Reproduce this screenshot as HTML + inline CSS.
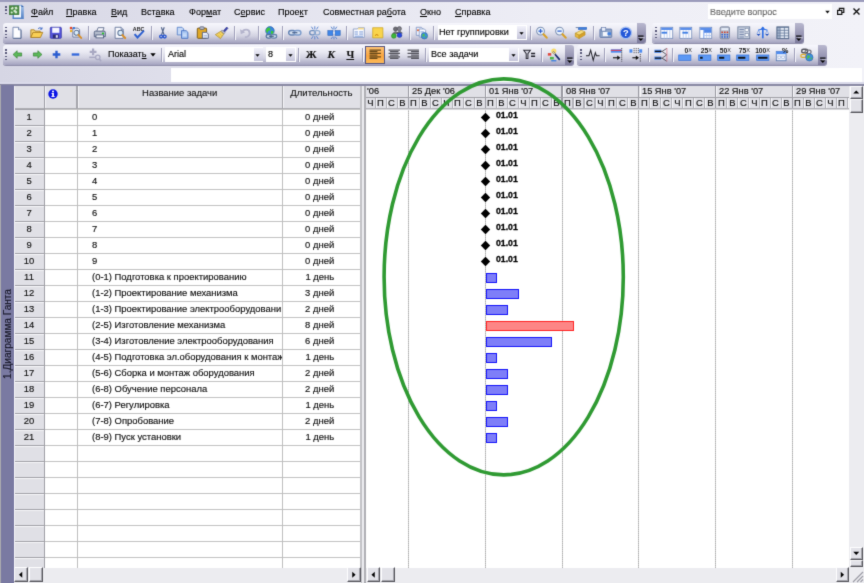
<!DOCTYPE html><html><head><meta charset="utf-8"><title>Project</title><style>
html,body{margin:0;padding:0}
body{width:864px;height:583px;overflow:hidden;position:relative;background:#fff;font-family:"Liberation Sans",sans-serif;font-size:9.45px;color:#111}
#all{position:absolute;left:0;top:0;width:864px;height:583px;overflow:hidden;filter:url(#soft)}
.a{position:absolute}
.t{will-change:transform;-webkit-text-stroke:0.15px #111;position:absolute;white-space:nowrap;line-height:12px;height:12px}
#dock{left:0;top:0;width:864px;height:85px;background:linear-gradient(90deg,#d6d6e4 0%,#e3e3ee 30%,#ededf5 62%,#f2f2f8 100%)}
svg{will-change:transform}
#topline{left:0;top:0;width:864px;height:1.6px;background:#9c9cbc}
.tb{position:absolute;height:20px;border-radius:3px 3px 3px 3px;background:linear-gradient(180deg,#f7f7fd 0%,#e9e9f2 35%,#d2d2e1 65%,#a3a2bf 100%);box-shadow:0 1px 0 #8f8eaa}
.opt{position:absolute;top:0;width:9px;height:20px;border-radius:0 3px 3px 0;background:linear-gradient(180deg,#b9b8cf 0%,#7c7a9c 100%)}
.grip{position:absolute;left:1.8px;top:4px;width:2px;height:13px;background:repeating-linear-gradient(180deg,#5c5c7c 0,#5c5c7c 1.5px,transparent 1.5px,transparent 3.3px)}
.sep{position:absolute;top:3px;width:1px;height:14px;background:#a0a0ba;box-shadow:1px 0 0 #f6f6fb}
.m{will-change:transform;position:absolute;top:6px;font-size:9.05px;line-height:12px;white-space:nowrap;color:#000;-webkit-text-stroke:0.12px #000}
.m u{text-decoration:underline;text-underline-offset:1px}
.hc{position:absolute;background:#e0e0e6}
</style></head><body><svg width="0" height="0" style="position:absolute"><filter id="soft" x="0" y="0" width="100%" height="100%" color-interpolation-filters="sRGB"><feConvolveMatrix order="3" kernelMatrix="0.01323 0.08855 0.01323 0.08855 0.59290 0.08855 0.01323 0.08855 0.01323" edgeMode="duplicate" preserveAlpha="true"/></filter></svg><div id="all">
<div class="a" id="dock"></div><div class="a" id="topline"></div>
<div class="grip" style="left:5px;top:6px;height:9px"></div>
<svg class="a" style="left:9px;top:3.6px" width="16" height="16" viewBox="0 0 16 16"><defs><linearGradient id="pg" x1="0" y1="0" x2="0" y2="1"><stop offset="0" stop-color="#a8c4ea"/><stop offset="1" stop-color="#4f7fc4"/></linearGradient></defs><path d="M3.500 .800h9l2.300 2.300v12h-11.300z" fill="url(#pg)"/><path d="M5 2h7v11.500h-7z" fill="#f4f8fd"/><path d="M12.500 .800l2.300 2.300h-2.300z" fill="#2f5fa8"/><rect x="0.300" y="1.800" width="9.600" height="8.800" fill="#4d8f45" stroke="#356f30" stroke-width=".7"/><path d="M1.500 4.500l2-1.700 1.500 1.200-2 2zM5.500 3l2.500-.3.500 2.200-2 .8zM4 7l1.800-1.500 2.700 2.500-1.500 1.800zM1.500 8l1.500-.800 1 1.800-1.800.5z" fill="#e4f2e0" opacity=".9"/></svg>
<div class="m" style="left:31px"><u>Ф</u>айл</div>
<div class="m" style="left:66px"><u>П</u>равка</div>
<div class="m" style="left:110.6px"><u>В</u>ид</div>
<div class="m" style="left:140.6px">Вст<u>а</u>вка</div>
<div class="m" style="left:188.8px">Фор<u>м</u>ат</div>
<div class="m" style="left:234px">С<u>е</u>рвис</div>
<div class="m" style="left:277.8px">Прое<u>к</u>т</div>
<div class="m" style="left:323px">Совместная ра<u>б</u>ота</div>
<div class="m" style="left:420px"><u>О</u>кно</div>
<div class="m" style="left:455.2px"><u>С</u>правка</div>
<div class="a" style="left:708px;top:4px;width:124px;height:15px;background:#fff"></div>
<div class="m" style="left:710px;top:5.5px;color:#8a8a8a">Введите вопрос</div>
<svg class="a" style="left:822px;top:4px" width="42" height="15" viewBox="0 0 42 15"><path d="M3.2 6.8 h4.6 l-2.3 2.6z" fill="#111"/><rect x="15.6" y="6.4" width="4.2" height="4" fill="none" stroke="#111" stroke-width="1.2"/><path d="M17.4 6.2 v-1.9 h4.4 v4.2 h-1.8" fill="none" stroke="#111" stroke-width="1.2"/><path d="M31.5 4.5 l6 6 M37.5 4.5 l-6 6" stroke="#111" stroke-width="1.4"/></svg>
<div class="tb" style="left:3px;top:23px;width:642.6px"><div class="opt" style="left:633.6px"></div><div class="grip" style="left:1.8px"></div></div>
<svg class="a" style="left:637.1999999999999px;top:34.9px" width="7.600" height="7.600" viewBox="0 0 7 7"><path d="M1 1h5" stroke="#000" stroke-width="1.100"/><path d="M1 3h5L3.500 5.600z" fill="#000"/><path d="M2 2h5" stroke="#fff" stroke-width=".6" opacity=".8" transform="translate(.6,.6)"/></svg>
<svg class="a" style="left:10.40px;top:26.20px" width="13.6" height="13.6" viewBox="0 0 16 16" overflow="visible"><path d="M3.500 1.500h6.500l3 3v10h-9.500z" fill="#fdfdff" stroke="#6a7ea8"/><path d="M10 1.500v3h3" fill="#d4deef" stroke="#6a7ea8"/><path d="M4 14.500h9v-9.500" fill="none" stroke="#4a5c84" stroke-width=".8"/></svg>
<svg class="a" style="left:30.20px;top:26.20px" width="13.6" height="13.6" viewBox="0 0 16 16" overflow="visible"><path d="M1 13.5V4.5h4l1 1.5h6v2" fill="#f7d774" stroke="#a87a1c"/><path d="M1 13.5l2.5-6h11.5l-2.7 6z" fill="#f9cf55" stroke="#a87a1c"/><path d="M9.5 3.2c1.5-1.6 3.5-1.4 4.3.3m.3-2v2.2h-2.2" fill="none" stroke="#3a66c4" stroke-width="1.1"/></svg>
<svg class="a" style="left:49.40px;top:26.20px" width="13.6" height="13.6" viewBox="0 0 16 16" overflow="visible"><rect x="1.500" y="1.500" width="13" height="13" rx="1" fill="#5454dc" stroke="#3434a4" stroke-width=".9"/><rect x="3.800" y="2" width="8.400" height="6" fill="#f6f6ff"/><rect x="4.500" y="10" width="7" height="4.500" fill="#2c2c74"/><rect x="8" y="10.800" width="2.400" height="3" fill="#e4e4f4"/></svg>
<svg class="a" style="left:68.70px;top:26.20px" width="13.6" height="13.6" viewBox="0 0 16 16" overflow="visible"><path d="M4.500 2.500h6l2 2v8.500h-8z" fill="#fafaff" stroke="#5f7096"/><rect x="1" y="1" width="2.800" height="2.800" fill="#e0482c"/><rect x="4.400" y="1.200" width="2.600" height="2.600" fill="#3b78d8"/><rect x="1.200" y="4.600" width="2.600" height="2.600" fill="#f0b428"/><circle cx="8.800" cy="8" r="3" fill="#d9ecfa" stroke="#5f7496" stroke-width="1.200"/><path d="M11 10.500l3.300 3.500" stroke="#d8902a" stroke-width="2.400" stroke-linecap="round"/></svg>
<svg class="a" style="left:92.90px;top:26.20px" width="13.6" height="13.6" viewBox="0 0 16 16" overflow="visible"><path d="M4.500 6l1.500-4h7l-1.500 4" fill="#fbfbff" stroke="#5a6888"/><path d="M1.500 7.500q0-1.500 1.500-1.500h10q1.500 0 1.500 1.500v5h-13z" fill="#b4bccc" stroke="#4c5a7c"/><rect x="3.500" y="10.500" width="9" height="3.500" fill="#eef0f6" stroke="#4c5a7c"/><rect x="10.500" y="7.800" width="2.400" height="1.900" fill="#22c422"/></svg>
<svg class="a" style="left:113.20px;top:26.20px" width="13.6" height="13.6" viewBox="0 0 16 16" overflow="visible"><path d="M2.500 1.500h7l2.500 2.500v10.500h-9.500z" fill="#fafaff" stroke="#5f7096"/><path d="M9.500 1.500v2.500h2.500" fill="#d4deef" stroke="#5f7096" stroke-width=".8"/><circle cx="8.800" cy="8.200" r="3.100" fill="#d9ecfa" stroke="#5f7496" stroke-width="1.200"/><path d="M11.100 10.800l3.200 3.400" stroke="#d8902a" stroke-width="2.400" stroke-linecap="round"/></svg>
<svg class="a" style="left:132.20px;top:26.20px" width="13.6" height="13.6" viewBox="0 0 16 16" overflow="visible"><text x="1" y="6" font-family="Liberation Sans" font-weight="bold" font-size="6.3" fill="#222">ABC</text><path d="M3 9.5l3.5 4L14 5.5" fill="none" stroke="#2c5fd0" stroke-width="2.3"/></svg>
<svg class="a" style="left:156.20px;top:26.20px" width="13.6" height="13.6" viewBox="0 0 16 16" overflow="visible"><path d="M6.300 1.500l3.200 9M9.700 1.500l-3.200 9" stroke="#56688e" stroke-width="1.400" fill="none"/><circle cx="6" cy="12.400" r="1.700" fill="none" stroke="#2a58d0" stroke-width="1.600"/><circle cx="10.200" cy="12.400" r="1.700" fill="none" stroke="#2a58d0" stroke-width="1.600"/></svg>
<svg class="a" style="left:175.70px;top:26.20px" width="13.6" height="13.6" viewBox="0 0 16 16" overflow="visible"><path d="M1.500 1.500h5.500l2 2v7h-7.500z" fill="#c8daf6" stroke="#5580c8"/><path d="M6.500 5.500h5.500l2 2v7h-7.500z" fill="#a8c6f2" stroke="#3f6cc0"/><path d="M8 9.500h4.500M8 11.500h4.500" stroke="#e4eefc" stroke-width=".9"/></svg>
<svg class="a" style="left:195.50px;top:26.20px" width="13.6" height="13.6" viewBox="0 0 16 16" overflow="visible"><rect x="1.500" y="2.500" width="11" height="12" rx="1" fill="#e0a828" stroke="#70500e"/><rect x="4.500" y="1" width="5" height="3" rx=".800" fill="#c0c4d0" stroke="#5a5f74"/><path d="M7.500 7.500h5l2 2v5h-7z" fill="#eef2fb" stroke="#4a5a80"/><path d="M9 11h4M9 13h4" stroke="#8aa2d4" stroke-width=".8"/></svg>
<svg class="a" style="left:215.20px;top:26.20px" width="13.6" height="13.6" viewBox="0 0 16 16" overflow="visible"><path d="M10 5.500l3.800-4.300 1.500 1.500L11.300 7z" fill="#3c44b0" stroke="#2a2f84" stroke-width=".7"/><path d="M8.600 4.600l3.200 3.200-1.600 1.600-3.200-3.200z" fill="#b8bccc" stroke="#666b84" stroke-width=".7"/><path d="M6.800 6.200l3.400 3.400-3.800 5.200-6-4.600z" fill="#f2d260" stroke="#a88420" stroke-width=".8"/><path d="M3 10l3 3M5 8.500l3 3" stroke="#d8b440" stroke-width=".7"/></svg>
<svg class="a" style="left:239.20px;top:26.20px" width="13.6" height="13.6" viewBox="0 0 16 16" overflow="visible"><path d="M4 7.500c1-4.300 8-4.500 8.500.5.400 3.500-2.800 5.200-5.500 5.200" fill="none" stroke="#b4b4cc" stroke-width="2.200"/><path d="M1.200 3.800l.9 6 5.300-2.400z" fill="#b4b4cc"/></svg>
<svg class="a" style="left:264.20px;top:26.20px" width="13.6" height="13.6" viewBox="0 0 16 16" overflow="visible"><circle cx="7" cy="5.700" r="5" fill="#3a86e0" stroke="#2b62a4" stroke-width=".8"/><path d="M3.500 2.800c2-2 4.500-.8 4 1.200s-3 1-3 3.500-2.300-1-2.300-2.500zM8 6c2-.8 3.800.2 3 2s-2.500 2-3 .5z" fill="#3cc83a"/><rect x="2.500" y="10" width="6.500" height="4.200" rx="2.100" fill="#c8d8ec" stroke="#54749c" stroke-width="1.500"/><rect x="8" y="10" width="7" height="4.200" rx="2.100" fill="#c8d8ec" stroke="#6484ac" stroke-width="1.500"/><path d="M6 12.100h5.500" stroke="#3c5478" stroke-width="1.200"/></svg>
<svg class="a" style="left:287.60px;top:26.20px" width="13.6" height="13.6" viewBox="0 0 16 16" overflow="visible"><rect x=".800" y="5.200" width="8" height="5.400" rx="2.700" fill="#d4e0f0" stroke="#6484b4" stroke-width="1.700"/><rect x="7.200" y="5.200" width="8" height="5.400" rx="2.700" fill="#d4e0f0" stroke="#7c9ccc" stroke-width="1.700"/><path d="M5 7.900h6" stroke="#445c84" stroke-width="1.300"/></svg>
<svg class="a" style="left:307.60px;top:26.20px" width="13.6" height="13.6" viewBox="0 0 16 16" overflow="visible"><rect x="2" y="5.500" width="6.500" height="5" rx="2.500" fill="none" stroke="#6c8cbc" stroke-width="1.500"/><rect x="7.500" y="5.500" width="6.500" height="5" rx="2.500" fill="none" stroke="#8eabd2" stroke-width="1.500"/><path d="M8 .300v3.700M4 .800l2 3.200M12 .800L10 4M8 15.700v-3.700M4 15.200l2-3.200M12 15.200L10 12" stroke="#5480cc" stroke-width="1.100"/></svg>
<svg class="a" style="left:326.90px;top:26.20px" width="13.6" height="13.6" viewBox="0 0 16 16" overflow="visible"><rect x="1" y="5.500" width="6" height="5.500" fill="#3f86e8" stroke="#2a5fb4" stroke-width=".7"/><rect x="9.500" y="5.500" width="6" height="5.500" fill="#3f86e8" stroke="#2a5fb4" stroke-width=".7"/><path d="M8.200 .300v3.700M4.800 .800l2 3.200M11.600 .800L9.600 4M8.200 15.700v-3.200M4.800 15.200l2-2.700M11.600 15.200l-2-2.700" stroke="#5480cc" stroke-width="1.100"/><path d="M7 8.200h2.500" stroke="#fff" stroke-width="1"/></svg>
<svg class="a" style="left:351.90px;top:26.20px" width="13.6" height="13.6" viewBox="0 0 16 16" overflow="visible"><path d="M1.500 3.500h5l1-1.500h7v11.500h-13z" fill="#fbfbff" stroke="#8a9cc0"/><path d="M7.500 2h6.500v2h-7z" fill="#f6dc8c"/><path d="M3 7h4M8.500 7h4.500M3 9.500h4M8.500 9.500h4.500M3 12h10" stroke="#5f86d0" stroke-width="1"/></svg>
<svg class="a" style="left:371.20px;top:26.20px" width="13.6" height="13.6" viewBox="0 0 16 16" overflow="visible"><path d="M2 2h12v12H2z" fill="#f9d44c" stroke="#c9a01c" stroke-width=".8"/><path d="M5 11.500c1-2 2.500-2 3.500 0" stroke="#d08a10" stroke-width="1.300" fill="none"/></svg>
<svg class="a" style="left:390.20px;top:26.20px" width="13.6" height="13.6" viewBox="0 0 16 16" overflow="visible"><circle cx="6.500" cy="3.600" r="2.500" fill="#6c6c74" stroke="#3c3c44" stroke-width=".6"/><circle cx="11" cy="3.200" r="2.500" fill="#80808a" stroke="#3c3c44" stroke-width=".6"/><path d="M3 9q3.500-4.500 7 0zM8 8.500q3.300-4.500 6.600 0z" fill="#77777f" stroke="#3c3c44" stroke-width=".5"/><circle cx="4.500" cy="11.700" r="2.800" fill="#3cb838" stroke="#1f7a1c" stroke-width=".6"/><circle cx="11.200" cy="10.800" r="2.800" fill="#2848dc" stroke="#1c2f9a" stroke-width=".6"/></svg>
<svg class="a" style="left:414.70px;top:26.20px" width="13.6" height="13.6" viewBox="0 0 16 16" overflow="visible"><path d="M1.500 1.500h6l1.500 1.500v8h-7.500z" fill="#f0f3fb" stroke="#7f96c4"/><path d="M5 3.500h6l1.500 1.500v8h-7.500z" fill="#fbfcff" stroke="#7f96c4"/><rect x="2.500" y="4" width="2" height="2" fill="#e0602c"/><path d="M6.500 7h4" stroke="#5f86d0"/><circle cx="11" cy="11.500" r="3.800" fill="#3d8fdc" stroke="#2b62a4" stroke-width=".7"/><path d="M9 10c1-1.500 3-.5 2.500.8s-2 .8-2 2.200-1.300-.8-.5-3zM12 12c1-.5 2 0 1.500 1s-1.500 1-1.500 0z" fill="#4fc24a"/></svg>
<svg class="a" style="left:535.20px;top:26.20px" width="13.6" height="13.6" viewBox="0 0 16 16" overflow="visible"><circle cx="6.500" cy="6" r="4.600" fill="#eaf3fc" stroke="#7f92b4" stroke-width="1.200"/><path d="M4 6h5M6.500 3.500v5" stroke="#2f5fd0" stroke-width="1.500"/><path d="M10 9.700l3.800 4" stroke="#d8a028" stroke-width="2.500" stroke-linecap="round"/></svg>
<svg class="a" style="left:554.20px;top:26.20px" width="13.6" height="13.6" viewBox="0 0 16 16" overflow="visible"><circle cx="6.500" cy="6" r="4.600" fill="#eaf3fc" stroke="#7f92b4" stroke-width="1.200"/><path d="M4 6h5" stroke="#2f5fd0" stroke-width="1.500"/><path d="M10 9.700l3.800 4" stroke="#d8a028" stroke-width="2.500" stroke-linecap="round"/></svg>
<svg class="a" style="left:574.20px;top:26.20px" width="13.6" height="13.6" viewBox="0 0 16 16" overflow="visible"><rect x="5" y="1.500" width="10" height="2.800" fill="#3f7fe0" stroke="#2a5cb0" stroke-width=".6"/><path d="M2 1.800h3.500" stroke="#7f92b4" stroke-width="1.300"/><path d="M1.500 8.500l7-3.500 4.500 2-7 3.800z" fill="#f7dc7c" stroke="#b8901c" stroke-width=".7"/><path d="M1.500 8.500v4l4.500 2.300v-4z" fill="#e8b83c" stroke="#b8901c" stroke-width=".7"/><path d="M6 10.800l7-3.800v3.600l-7 4.200z" fill="#d8a028" stroke="#b8901c" stroke-width=".7"/></svg>
<svg class="a" style="left:598.50px;top:26.20px" width="13.6" height="13.6" viewBox="0 0 16 16" overflow="visible"><rect x="1" y="3.500" width="14" height="10" rx="1" fill="#8fa4c8" stroke="#5c74a4" stroke-width=".9"/><rect x="3" y="2" width="5" height="4" fill="#e9eefa" stroke="#5c74a4" stroke-width=".7"/><rect x="4.500" y="7" width="6" height="5" fill="#f4f6fc"/><rect x="10" y="7.500" width="4" height="3" fill="#3f7fe0"/></svg>
<svg class="a" style="left:618.50px;top:26.20px" width="13.6" height="13.6" viewBox="0 0 16 16" overflow="visible"><circle cx="8" cy="8" r="6.800" fill="#2458d8" stroke="#a8c0f0" stroke-width="1.500"/><text x="8" y="12" text-anchor="middle" font-family="Liberation Sans" font-weight="bold" font-size="11" fill="#fff">?</text></svg>
<div class="sep" style="left:87.5px;top:26px"></div>
<div class="sep" style="left:151.0px;top:26px"></div>
<div class="sep" style="left:233.5px;top:26px"></div>
<div class="sep" style="left:258.0px;top:26px"></div>
<div class="sep" style="left:282.2px;top:26px"></div>
<div class="sep" style="left:346.0px;top:26px"></div>
<div class="sep" style="left:408.9px;top:26px"></div>
<div class="sep" style="left:433.2px;top:26px"></div>
<div class="sep" style="left:530.1px;top:26px"></div>
<div class="sep" style="left:592.5px;top:26px"></div>
<div class="a" style="left:438px;top:25px;width:88.5px;height:15px;background:#fff"></div>
<div class="a" style="left:517.0px;top:25.8px;width:9px;height:13.4px;background:linear-gradient(180deg,#f2f2fa,#c4c4da)"></div>
<svg class="a" style="left:518.9px;top:31.5px" width="5" height="3.200" viewBox="0 0 6 4"><path d="M.3 .3h5.400L3 3.600z" fill="#000"/></svg>
<div class="m" style="left:439.0px;top:26.2px;font-size:9.1px">Нет группировки</div>
<div class="tb" style="left:651.5px;top:23px;width:152.10000000000002px"><div class="opt" style="left:143.10000000000002px"></div><div class="grip" style="left:3.2px"></div></div>
<svg class="a" style="left:795.1999999999999px;top:34.9px" width="7.600" height="7.600" viewBox="0 0 7 7"><path d="M1 1h5" stroke="#000" stroke-width="1.100"/><path d="M1 3h5L3.500 5.600z" fill="#000"/><path d="M2 2h5" stroke="#fff" stroke-width=".6" opacity=".8" transform="translate(.6,.6)"/></svg>
<svg class="a" style="left:659.70px;top:26.20px" width="13.6" height="13.6" viewBox="0 0 16 16" overflow="visible"><rect x="1" y="1.5" width="14" height="13" fill="#fdfdff" stroke="#6f88b8" stroke-width=".9"/><rect x="1.4" y="1.9" width="13.2" height="2.8" fill="#5a8eea"/><path d="M5 5v9.500M8.300 5v9.500M11.600 5v9.500" stroke="#c4d4f2" stroke-width="1.300"/><rect x="1.800" y="6.800" width="6.500" height="2.200" fill="#3f7fe4"/></svg>
<svg class="a" style="left:679.20px;top:26.20px" width="13.6" height="13.6" viewBox="0 0 16 16" overflow="visible"><rect x="1" y="1.5" width="14" height="13" fill="#fdfdff" stroke="#6f88b8" stroke-width=".9"/><rect x="1.4" y="1.9" width="13.2" height="2.8" fill="#5a8eea"/><path d="M5 5v9.500M8.300 5v9.500M11.600 5v9.500" stroke="#c4d4f2" stroke-width="1.300"/><rect x="4" y="6.800" width="6.500" height="2.200" fill="#3f7fe4"/></svg>
<svg class="a" style="left:698.50px;top:26.20px" width="13.6" height="13.6" viewBox="0 0 16 16" overflow="visible"><rect x="1" y="1.5" width="14" height="13" fill="#fdfdff" stroke="#6f88b8" stroke-width=".9"/><rect x="1.4" y="1.9" width="13.2" height="2.800" fill="#5a8eea"/><rect x="6" y="4.700" width="8.600" height="3.300" fill="#4f86e8"/><path d="M5.700 4.700v9.800" stroke="#5a8eea" stroke-width="1"/><path d="M9 8v6.500M12 8v6.500M6 11.200h8.600" stroke="#b4c8f0" stroke-width="1"/></svg>
<svg class="a" style="left:717.90px;top:26.20px" width="13.6" height="13.6" viewBox="0 0 16 16" overflow="visible"><rect x="2.500" y="1" width="11" height="14" rx="1.500" fill="#b4bccc" stroke="#6c7894" stroke-width=".9"/><rect x="4" y="2.500" width="8" height="2.500" fill="#e6ecf8"/><g fill="#d0402c"><rect x="4" y="6.500" width="1.800" height="1.800"/><rect x="7.100" y="6.500" width="1.800" height="1.800"/><rect x="10.200" y="6.500" width="1.800" height="1.800"/></g><g fill="#2f5fd0"><rect x="4" y="9.300" width="1.800" height="1.800"/><rect x="7.100" y="9.300" width="1.800" height="1.800"/><rect x="10.200" y="9.300" width="1.800" height="1.800"/><rect x="4" y="12" width="1.800" height="1.800"/><rect x="7.100" y="12" width="1.800" height="1.800"/><rect x="10.200" y="12" width="1.800" height="1.800"/></g></svg>
<svg class="a" style="left:737.20px;top:26.20px" width="13.6" height="13.6" viewBox="0 0 16 16" overflow="visible"><rect x="1" y="1" width="14" height="14" fill="#c4ccdc" stroke="#6c7c9c" stroke-width="1"/><path d="M3 4h5M3 7h5M3 10h5M3 13h5" stroke="#7c8cb0" stroke-width="1.200"/><rect x="9.500" y="3" width="4" height="3.500" fill="#fbfcff" stroke="#6c7c9c" stroke-width=".6"/><rect x="9.500" y="9" width="4" height="3.500" fill="#fbfcff" stroke="#6c7c9c" stroke-width=".6"/></svg>
<svg class="a" style="left:756.20px;top:26.20px" width="13.6" height="13.6" viewBox="0 0 16 16" overflow="visible"><path d="M8 1.500v13" stroke="#2f6fe4" stroke-width="2"/><path d="M8 .5l2.500 3h-5z" fill="#2f6fe4"/><path d="M2.500 5q5.500-2.500 11 0" fill="none" stroke="#2f6fe4" stroke-width="1.200"/><path d="M.800 9.500h4.400l-2.200 2.300zM10.800 9.500h4.400l-2.200 2.300z" fill="#1f4fc0"/><path d="M3 5l-2 4.500M3 5l2 4.500M13 5l-2 4.500M13 5l2 4.500" stroke="#5f8fe8" stroke-width=".7"/></svg>
<svg class="a" style="left:775.80px;top:26.20px" width="13.6" height="13.6" viewBox="0 0 16 16" overflow="visible"><rect x="1" y="1" width="14" height="14" fill="#6a7e9e" stroke="#566a8a" stroke-width="1"/><g fill="#e4eaf4"><rect x="5.300" y="2.200" width="4" height="2.300"/><rect x="10.300" y="2.200" width="4" height="2.300"/><rect x="5.300" y="5.500" width="4" height="2.300"/><rect x="10.300" y="5.500" width="4" height="2.300"/><rect x="5.300" y="8.800" width="4" height="2.300"/><rect x="10.300" y="8.800" width="4" height="2.300"/><rect x="5.300" y="12.100" width="4" height="2"/><rect x="10.300" y="12.100" width="4" height="2"/></g><g fill="#a4b4cc"><rect x="1.800" y="2.200" width="2.600" height="2.300"/><rect x="1.800" y="5.500" width="2.600" height="2.300"/><rect x="1.800" y="8.800" width="2.600" height="2.300"/><rect x="1.800" y="12.100" width="2.600" height="2"/></g></svg>
<div class="tb" style="left:3px;top:45px;width:571.4px"><div class="opt" style="left:562.4px"></div><div class="grip" style="left:1.8px"></div></div>
<svg class="a" style="left:565.9999999999999px;top:56.9px" width="7.600" height="7.600" viewBox="0 0 7 7"><path d="M1 1h5" stroke="#000" stroke-width="1.100"/><path d="M1 3h5L3.500 5.600z" fill="#000"/><path d="M2 2h5" stroke="#fff" stroke-width=".6" opacity=".8" transform="translate(.6,.6)"/></svg>
<svg class="a" style="left:12.20px;top:49.00px" width="11" height="11" viewBox="0 0 16 16" overflow="visible"><path d="M3 3.500l-2.500 4.500 2.500 4.500" fill="none"/><path d="M1.500 8l6-5.500v3.200h6.500v4.600H7.500v3.200z" fill="#5cb85a" stroke="#2f7c2c" stroke-width=".9"/></svg>
<svg class="a" style="left:31.50px;top:49.00px" width="11" height="11" viewBox="0 0 16 16" overflow="visible"><path d="M14.500 8l-6-5.500v3.200H2v4.600h6.500v3.200z" fill="#5cb85a" stroke="#2f7c2c" stroke-width=".9"/></svg>
<svg class="a" style="left:50.50px;top:49.00px" width="11" height="11" viewBox="0 0 16 16" overflow="visible"><path d="M8 2.500v11M2.500 8h11" stroke="#2a5cd0" stroke-width="3.400"/></svg>
<svg class="a" style="left:69.80px;top:49.00px" width="11" height="11" viewBox="0 0 16 16" overflow="visible"><path d="M2.500 8h11" stroke="#3468dc" stroke-width="3.400"/></svg>
<svg class="a" style="left:88.20px;top:47.70px" width="13.6" height="13.6" viewBox="0 0 16 16" overflow="visible"><path d="M6 .500v8M2 4.500h8" stroke="#a8a8c2" stroke-width="2.600"/><path d="M1.500 11h7" stroke="#a8a8c2" stroke-width="1.800"/><circle cx="11.500" cy="11" r="2.600" fill="none" stroke="#a8a8c2" stroke-width="1.500"/><path d="M13.300 13l2.200 2.500" stroke="#a8a8c2" stroke-width="1.700"/></svg>
<div class="m" style="left:107.5px;top:48.2px">Показат<u>ь</u></div>
<svg class="a" style="left:149.600px;top:53.1px" width="6" height="4" viewBox="0 0 6 4"><path d="M.3 .3h5.400L3 3.600z" fill="#000"/></svg>
<div class="sep" style="left:161.0px;top:48px"></div>
<div class="sep" style="left:298.2px;top:48px"></div>
<div class="sep" style="left:361.5px;top:48px"></div>
<div class="sep" style="left:425.1px;top:48px"></div>
<div class="sep" style="left:540.5px;top:48px"></div>
<div class="a" style="left:165px;top:47px;width:98px;height:15px;background:#fff"></div>
<div class="a" style="left:253.5px;top:47.8px;width:9px;height:13.4px;background:linear-gradient(180deg,#f2f2fa,#c4c4da)"></div>
<svg class="a" style="left:255.4px;top:53.5px" width="5" height="3.200" viewBox="0 0 6 4"><path d="M.3 .3h5.400L3 3.600z" fill="#000"/></svg>
<div class="m" style="left:167.5px;top:48.2px;font-size:9.05px">Arial</div>
<div class="a" style="left:266px;top:47px;width:29.5px;height:15px;background:#fff"></div>
<div class="a" style="left:286.0px;top:47.8px;width:9px;height:13.4px;background:linear-gradient(180deg,#f2f2fa,#c4c4da)"></div>
<svg class="a" style="left:287.9px;top:53.5px" width="5" height="3.200" viewBox="0 0 6 4"><path d="M.3 .3h5.400L3 3.600z" fill="#000"/></svg>
<div class="m" style="left:267.7px;top:48.2px;font-size:9.05px">8</div>
<div class="t" style="left:305px;top:48.0px;width:12.500px;text-align:center;font-family:Liberation Serif,serif;font-weight:bold;font-size:11px;line-height:13px">Ж</div>
<div class="t" style="left:324.500px;top:48.0px;width:12.500px;text-align:center;font-family:Liberation Serif,serif;font-weight:bold;font-style:italic;font-size:11px;line-height:13px">К</div>
<div class="t" style="left:343.500px;top:48.0px;width:12.500px;text-align:center;font-family:Liberation Serif,serif;font-weight:bold;font-size:10.5px;line-height:13px;text-decoration:underline">Ч</div>
<div class="a" style="left:365.2px;top:45.8px;width:19.500px;height:17.800px;box-sizing:border-box;border:1px solid #55557f;background:linear-gradient(180deg,#fdc274,#f9a642 55%,#fbb858)"></div>
<svg class="a" style="left:368.75px;top:48.15px" width="12.5" height="12.5" viewBox="0 0 16 16" overflow="visible"><path d="M0.7 2.60H15.3M0.7 4.75H10.8M0.7 6.90H15.3M0.7 9.05H10.8M0.7 11.20H15.3M0.7 13.35H10.8" stroke="#6a4a18" stroke-width="1.600" fill="none"/></svg>
<svg class="a" style="left:387.75px;top:48.15px" width="12.5" height="12.5" viewBox="0 0 16 16" overflow="visible"><path d="M0.7 2.60H15.3M2.6 4.75H13.4M0.7 6.90H15.3M2.6 9.05H13.4M0.7 11.20H15.3M2.6 13.35H13.4" stroke="#55555e" stroke-width="1.600" fill="none"/></svg>
<svg class="a" style="left:406.75px;top:48.15px" width="12.5" height="12.5" viewBox="0 0 16 16" overflow="visible"><path d="M0.7 2.60H15.3M5.2 4.75H15.3M0.7 6.90H15.3M5.2 9.05H15.3M0.7 11.20H15.3M5.2 13.35H15.3" stroke="#55555e" stroke-width="1.600" fill="none"/></svg>
<div class="a" style="left:429.4px;top:47.5px;width:89.39999999999998px;height:14.5px;background:#fff"></div>
<div class="a" style="left:509.29999999999995px;top:48.3px;width:9px;height:12.9px;background:linear-gradient(180deg,#f2f2fa,#c4c4da)"></div>
<svg class="a" style="left:511.19999999999993px;top:53.75px" width="5" height="3.200" viewBox="0 0 6 4"><path d="M.3 .3h5.400L3 3.600z" fill="#000"/></svg>
<div class="m" style="left:431.2px;top:48.45px;font-size:9.1px">Все задачи</div>
<svg class="a" style="left:522.75px;top:48.25px" width="12.5" height="12.5" viewBox="0 0 16 16" overflow="visible"><path d="M1 2.800h8.400l-3.100 4.400v6.300h-2.200v-6.300z" fill="#d4d4e0" stroke="#2c2c36" stroke-width="1.300"/><path d="M10.300 7h5.200M10.300 10.500h5.200" stroke="#22222c" stroke-width="1.800"/></svg>
<svg class="a" style="left:547.20px;top:47.70px" width="13.6" height="13.6" viewBox="0 0 16 16" overflow="visible"><circle cx="8" cy="3.500" r="3" fill="#f9dc6c"/><rect x="1" y="6" width="4" height="3" fill="#e0483c"/><rect x="3.500" y="10.500" width="4.500" height="3" fill="#4cb848"/><path d="M5 15h6" stroke="#3f7fe0" stroke-width="1.600"/><path d="M7 4.500l8 9.500" stroke="#1c2c6c" stroke-width="2"/><path d="M7 4.500l2.500 3" stroke="#f4e8a0" stroke-width="1.200"/></svg>
<div class="tb" style="left:576.5px;top:45px;width:250.60000000000002px"><div class="opt" style="left:241.60000000000002px"></div><div class="grip" style="left:3.0px"></div></div>
<svg class="a" style="left:818.6999999999999px;top:56.9px" width="7.600" height="7.600" viewBox="0 0 7 7"><path d="M1 1h5" stroke="#000" stroke-width="1.100"/><path d="M1 3h5L3.500 5.600z" fill="#000"/><path d="M2 2h5" stroke="#fff" stroke-width=".6" opacity=".8" transform="translate(.6,.6)"/></svg>
<svg class="a" style="left:585.70px;top:47.70px" width="13.6" height="13.6" viewBox="0 0 16 16" overflow="visible"><path d="M0 9h3.500l2-6.500 3 12 2.500-9 1.200 3.500h3.800" fill="none" stroke="#22222a" stroke-width="1.200"/></svg>
<svg class="a" style="left:610.20px;top:47.70px" width="13.6" height="13.6" viewBox="0 0 16 16" overflow="visible"><rect x="1" y="1.500" width="12.500" height="4" fill="#4f8cf0"/><path d="M1 2.800h12.500" stroke="#d04868" stroke-width="1.400"/><path d="M13.800 0v16" stroke="#22222a" stroke-width=".9" stroke-dasharray="1.500 1"/><path d="M3.500 11.500h7" stroke="#111" stroke-width="1.300"/><path d="M8.500 8.800l3.800 2.700-3.800 2.700z" fill="#111"/></svg>
<svg class="a" style="left:629.20px;top:47.70px" width="13.6" height="13.6" viewBox="0 0 16 16" overflow="visible"><rect x="0.500" y="1.500" width="3.500" height="4" fill="#4f8cf0"/><rect x="12" y="1.500" width="3.500" height="4" fill="#4f8cf0"/><path d="M6 0v7M8.500 0v7M11 0v7" stroke="#33333c" stroke-width=".9" stroke-dasharray="1.400 .9"/><path d="M13.300 7v9" stroke="#22222a" stroke-width=".9" stroke-dasharray="1.500 1"/><path d="M4 11.500h6" stroke="#111" stroke-width="1.300"/><path d="M8 8.800l3.800 2.700-3.800 2.700z" fill="#111"/></svg>
<svg class="a" style="left:654.20px;top:47.70px" width="13.6" height="13.6" viewBox="0 0 16 16" overflow="visible"><rect x=".500" y="2" width="8" height="3.800" fill="#4f8cf0"/><rect x=".500" y="10" width="8" height="3.800" fill="#4f8cf0"/><path d="M1 3.900h8M1 11.900h8" stroke="#111" stroke-width="1.500"/><path d="M15 .500L9.500 4l5.500 4-5.500 4 5.500 3.500" fill="none" stroke="#33333c" stroke-width=".9"/><path d="M15.200 0v16" stroke="#d86c7c" stroke-width=".8"/></svg>
<svg class="a" style="left:678.20px;top:47.70px" width="13.6" height="13.6" viewBox="0 0 16 16" overflow="visible"><text x="16.400" y="6.400" text-anchor="end" font-family="Liberation Sans" font-weight="bold" font-size="7.900" fill="#1a1a1a">0<tspan font-size="6.400" dy="-1.300" font-weight="normal">X</tspan></text><rect x=".800" y="8.200" width="14.400" height="6.500" fill="#5c98f4" stroke="#3a74d8" stroke-width=".8"/></svg>
<svg class="a" style="left:697.80px;top:47.70px" width="13.6" height="13.6" viewBox="0 0 16 16" overflow="visible"><text x="16.400" y="6.400" text-anchor="end" font-family="Liberation Sans" font-weight="bold" font-size="7.900" fill="#1a1a1a">25<tspan font-size="6.400" dy="-1.300" font-weight="normal">X</tspan></text><rect x=".800" y="8.200" width="14.400" height="6.500" fill="#5c98f4" stroke="#3a74d8" stroke-width=".8"/><path d="M2.500 11.500h3" stroke="#111" stroke-width="2.300"/></svg>
<svg class="a" style="left:717.00px;top:47.70px" width="13.6" height="13.6" viewBox="0 0 16 16" overflow="visible"><text x="16.400" y="6.400" text-anchor="end" font-family="Liberation Sans" font-weight="bold" font-size="7.900" fill="#1a1a1a">50<tspan font-size="6.400" dy="-1.300" font-weight="normal">X</tspan></text><rect x=".800" y="8.200" width="14.400" height="6.500" fill="#5c98f4" stroke="#3a74d8" stroke-width=".8"/><path d="M2.500 11.500h6" stroke="#111" stroke-width="2.300"/></svg>
<svg class="a" style="left:736.30px;top:47.70px" width="13.6" height="13.6" viewBox="0 0 16 16" overflow="visible"><text x="16.400" y="6.400" text-anchor="end" font-family="Liberation Sans" font-weight="bold" font-size="7.900" fill="#1a1a1a">75<tspan font-size="6.400" dy="-1.300" font-weight="normal">X</tspan></text><rect x=".800" y="8.200" width="14.400" height="6.500" fill="#5c98f4" stroke="#3a74d8" stroke-width=".8"/><path d="M2.500 11.500h8.5" stroke="#111" stroke-width="2.300"/></svg>
<svg class="a" style="left:755.70px;top:47.70px" width="13.6" height="13.6" viewBox="0 0 16 16" overflow="visible"><text x="16.400" y="6.400" text-anchor="end" font-family="Liberation Sans" font-weight="bold" font-size="7.900" fill="#1a1a1a">100<tspan font-size="6.400" dy="-1.300" font-weight="normal">X</tspan></text><rect x=".800" y="8.200" width="14.400" height="6.500" fill="#5c98f4" stroke="#3a74d8" stroke-width=".8"/><path d="M2.500 11.500h11" stroke="#111" stroke-width="2.300"/></svg>
<svg class="a" style="left:775.20px;top:47.70px" width="13.6" height="13.6" viewBox="0 0 16 16" overflow="visible"><rect x="1.500" y="4" width="11.500" height="11" fill="#e8eefa" stroke="#5c7cb4" stroke-width="1"/><rect x="1.500" y="4" width="11.500" height="3.200" fill="#4f8cf0"/><rect x="3.500" y="9.500" width="3" height="3" fill="#fbfcff" stroke="#8ca4d0" stroke-width=".6"/><rect x="8" y="9.500" width="3" height="3" fill="#fbfcff" stroke="#8ca4d0" stroke-width=".6"/><text x="15.800" y="5.500" text-anchor="end" font-family="Liberation Sans" font-weight="bold" font-size="8.500" fill="#111">%</text></svg>
<svg class="a" style="left:800.20px;top:47.70px" width="13.6" height="13.6" viewBox="0 0 16 16" overflow="visible"><rect x="2" y="1.500" width="7" height="4.200" rx="2" fill="none" stroke="#55555f" stroke-width="1.700"/><rect x="6" y="2.500" width="7" height="4.200" rx="2" fill="none" stroke="#77777f" stroke-width="1.600"/><rect x="1" y="7.500" width="6" height="3.500" rx="1.700" fill="none" stroke="#e0b030" stroke-width="1.500"/><circle cx="11" cy="11" r="4.300" fill="#3d8fdc" stroke="#2b62a4" stroke-width=".7"/><path d="M8.500 9.500c1.500-2 3.500-.5 3 1s-2 1-2 2.500-1.800-1-1-3.500zM12.500 11.500c1-.5 2 0 1.500 1.200s-1.800 1.200-1.500-1.200z" fill="#4fc24a"/></svg>
<div class="sep" style="left:603.9px;top:48px"></div>
<div class="sep" style="left:648.0px;top:48px"></div>
<div class="sep" style="left:672.0px;top:48px"></div>
<div class="sep" style="left:793.9px;top:48px"></div>
<div class="a" style="left:171px;top:68px;width:691px;height:14px;background:#fff"></div>
<div class="a" style="left:0;top:82px;width:864px;height:3px;background:#dadaea"></div>
<div class="a" style="left:0;top:84.4px;width:864px;height:1.6px;background:#8a8aa4"></div>
<div class="a" style="left:0;top:85px;width:14px;height:498px;background:#7a7aa2"></div>
<div class="a" style="left:0;top:85px;width:1px;height:498px;background:#aaaaae"></div>
<div class="t" style="left:-42px;top:328.2px;width:100px;text-align:center;transform:rotate(-90deg);color:#15152a;font-size:10.1px">1.Диаграмма Ганта</div>
<div class="a" style="left:44px;top:109px;width:317px;height:458.5px;background:#fff"></div>
<div class="hc" style="left:14px;top:86px;width:347px;height:23px"></div>
<div class="hc" style="left:14px;top:109px;width:30px;height:458.5px"></div>
<div class="a" style="left:44px;top:108.5px;width:317px;height:1.2px;background:#c2c2c2"></div>
<div class="a" style="left:14px;top:108.5px;width:30px;height:1.3px;background:#a2a2a8"></div>
<div class="a" style="left:44px;top:124.5px;width:317px;height:1.2px;background:#c2c2c2"></div>
<div class="a" style="left:14px;top:124.5px;width:30px;height:1.3px;background:#a2a2a8"></div>
<div class="a" style="left:14px;top:125.8px;width:30px;height:1px;background:#f6f6fa"></div>
<div class="a" style="left:44px;top:140.5px;width:317px;height:1.2px;background:#c2c2c2"></div>
<div class="a" style="left:14px;top:140.5px;width:30px;height:1.3px;background:#a2a2a8"></div>
<div class="a" style="left:14px;top:141.8px;width:30px;height:1px;background:#f6f6fa"></div>
<div class="a" style="left:44px;top:156.5px;width:317px;height:1.2px;background:#c2c2c2"></div>
<div class="a" style="left:14px;top:156.5px;width:30px;height:1.3px;background:#a2a2a8"></div>
<div class="a" style="left:14px;top:157.8px;width:30px;height:1px;background:#f6f6fa"></div>
<div class="a" style="left:44px;top:172.5px;width:317px;height:1.2px;background:#c2c2c2"></div>
<div class="a" style="left:14px;top:172.5px;width:30px;height:1.3px;background:#a2a2a8"></div>
<div class="a" style="left:14px;top:173.8px;width:30px;height:1px;background:#f6f6fa"></div>
<div class="a" style="left:44px;top:188.5px;width:317px;height:1.2px;background:#c2c2c2"></div>
<div class="a" style="left:14px;top:188.5px;width:30px;height:1.3px;background:#a2a2a8"></div>
<div class="a" style="left:14px;top:189.8px;width:30px;height:1px;background:#f6f6fa"></div>
<div class="a" style="left:44px;top:204.5px;width:317px;height:1.2px;background:#c2c2c2"></div>
<div class="a" style="left:14px;top:204.5px;width:30px;height:1.3px;background:#a2a2a8"></div>
<div class="a" style="left:14px;top:205.8px;width:30px;height:1px;background:#f6f6fa"></div>
<div class="a" style="left:44px;top:220.5px;width:317px;height:1.2px;background:#c2c2c2"></div>
<div class="a" style="left:14px;top:220.5px;width:30px;height:1.3px;background:#a2a2a8"></div>
<div class="a" style="left:14px;top:221.8px;width:30px;height:1px;background:#f6f6fa"></div>
<div class="a" style="left:44px;top:236.5px;width:317px;height:1.2px;background:#c2c2c2"></div>
<div class="a" style="left:14px;top:236.5px;width:30px;height:1.3px;background:#a2a2a8"></div>
<div class="a" style="left:14px;top:237.8px;width:30px;height:1px;background:#f6f6fa"></div>
<div class="a" style="left:44px;top:252.5px;width:317px;height:1.2px;background:#c2c2c2"></div>
<div class="a" style="left:14px;top:252.5px;width:30px;height:1.3px;background:#a2a2a8"></div>
<div class="a" style="left:14px;top:253.8px;width:30px;height:1px;background:#f6f6fa"></div>
<div class="a" style="left:44px;top:268.5px;width:317px;height:1.2px;background:#c2c2c2"></div>
<div class="a" style="left:14px;top:268.5px;width:30px;height:1.3px;background:#a2a2a8"></div>
<div class="a" style="left:14px;top:269.8px;width:30px;height:1px;background:#f6f6fa"></div>
<div class="a" style="left:44px;top:284.5px;width:317px;height:1.2px;background:#c2c2c2"></div>
<div class="a" style="left:14px;top:284.5px;width:30px;height:1.3px;background:#a2a2a8"></div>
<div class="a" style="left:14px;top:285.8px;width:30px;height:1px;background:#f6f6fa"></div>
<div class="a" style="left:44px;top:300.5px;width:317px;height:1.2px;background:#c2c2c2"></div>
<div class="a" style="left:14px;top:300.5px;width:30px;height:1.3px;background:#a2a2a8"></div>
<div class="a" style="left:14px;top:301.8px;width:30px;height:1px;background:#f6f6fa"></div>
<div class="a" style="left:44px;top:316.5px;width:317px;height:1.2px;background:#c2c2c2"></div>
<div class="a" style="left:14px;top:316.5px;width:30px;height:1.3px;background:#a2a2a8"></div>
<div class="a" style="left:14px;top:317.8px;width:30px;height:1px;background:#f6f6fa"></div>
<div class="a" style="left:44px;top:332.5px;width:317px;height:1.2px;background:#c2c2c2"></div>
<div class="a" style="left:14px;top:332.5px;width:30px;height:1.3px;background:#a2a2a8"></div>
<div class="a" style="left:14px;top:333.8px;width:30px;height:1px;background:#f6f6fa"></div>
<div class="a" style="left:44px;top:348.5px;width:317px;height:1.2px;background:#c2c2c2"></div>
<div class="a" style="left:14px;top:348.5px;width:30px;height:1.3px;background:#a2a2a8"></div>
<div class="a" style="left:14px;top:349.8px;width:30px;height:1px;background:#f6f6fa"></div>
<div class="a" style="left:44px;top:364.5px;width:317px;height:1.2px;background:#c2c2c2"></div>
<div class="a" style="left:14px;top:364.5px;width:30px;height:1.3px;background:#a2a2a8"></div>
<div class="a" style="left:14px;top:365.8px;width:30px;height:1px;background:#f6f6fa"></div>
<div class="a" style="left:44px;top:380.5px;width:317px;height:1.2px;background:#c2c2c2"></div>
<div class="a" style="left:14px;top:380.5px;width:30px;height:1.3px;background:#a2a2a8"></div>
<div class="a" style="left:14px;top:381.8px;width:30px;height:1px;background:#f6f6fa"></div>
<div class="a" style="left:44px;top:396.5px;width:317px;height:1.2px;background:#c2c2c2"></div>
<div class="a" style="left:14px;top:396.5px;width:30px;height:1.3px;background:#a2a2a8"></div>
<div class="a" style="left:14px;top:397.8px;width:30px;height:1px;background:#f6f6fa"></div>
<div class="a" style="left:44px;top:412.5px;width:317px;height:1.2px;background:#c2c2c2"></div>
<div class="a" style="left:14px;top:412.5px;width:30px;height:1.3px;background:#a2a2a8"></div>
<div class="a" style="left:14px;top:413.8px;width:30px;height:1px;background:#f6f6fa"></div>
<div class="a" style="left:44px;top:428.5px;width:317px;height:1.2px;background:#c2c2c2"></div>
<div class="a" style="left:14px;top:428.5px;width:30px;height:1.3px;background:#a2a2a8"></div>
<div class="a" style="left:14px;top:429.8px;width:30px;height:1px;background:#f6f6fa"></div>
<div class="a" style="left:44px;top:444.5px;width:317px;height:1.2px;background:#c2c2c2"></div>
<div class="a" style="left:14px;top:444.5px;width:30px;height:1.3px;background:#a2a2a8"></div>
<div class="a" style="left:14px;top:445.8px;width:30px;height:1px;background:#f6f6fa"></div>
<div class="a" style="left:44px;top:460.5px;width:317px;height:1.2px;background:#c2c2c2"></div>
<div class="a" style="left:14px;top:460.5px;width:30px;height:1.3px;background:#a2a2a8"></div>
<div class="a" style="left:14px;top:461.8px;width:30px;height:1px;background:#f6f6fa"></div>
<div class="a" style="left:44px;top:476.5px;width:317px;height:1.2px;background:#c2c2c2"></div>
<div class="a" style="left:14px;top:476.5px;width:30px;height:1.3px;background:#a2a2a8"></div>
<div class="a" style="left:14px;top:477.8px;width:30px;height:1px;background:#f6f6fa"></div>
<div class="a" style="left:44px;top:492.5px;width:317px;height:1.2px;background:#c2c2c2"></div>
<div class="a" style="left:14px;top:492.5px;width:30px;height:1.3px;background:#a2a2a8"></div>
<div class="a" style="left:14px;top:493.8px;width:30px;height:1px;background:#f6f6fa"></div>
<div class="a" style="left:44px;top:508.5px;width:317px;height:1.2px;background:#c2c2c2"></div>
<div class="a" style="left:14px;top:508.5px;width:30px;height:1.3px;background:#a2a2a8"></div>
<div class="a" style="left:14px;top:509.8px;width:30px;height:1px;background:#f6f6fa"></div>
<div class="a" style="left:44px;top:524.5px;width:317px;height:1.2px;background:#c2c2c2"></div>
<div class="a" style="left:14px;top:524.5px;width:30px;height:1.3px;background:#a2a2a8"></div>
<div class="a" style="left:14px;top:525.8px;width:30px;height:1px;background:#f6f6fa"></div>
<div class="a" style="left:44px;top:540.5px;width:317px;height:1.2px;background:#c2c2c2"></div>
<div class="a" style="left:14px;top:540.5px;width:30px;height:1.3px;background:#a2a2a8"></div>
<div class="a" style="left:14px;top:541.8px;width:30px;height:1px;background:#f6f6fa"></div>
<div class="a" style="left:44px;top:556.5px;width:317px;height:1.2px;background:#c2c2c2"></div>
<div class="a" style="left:14px;top:556.5px;width:30px;height:1.3px;background:#a2a2a8"></div>
<div class="a" style="left:14px;top:557.8px;width:30px;height:1px;background:#f6f6fa"></div>
<div class="a" style="left:14px;top:108.1px;width:347px;height:1.3px;background:#adadb2"></div>
<div class="a" style="left:43.5px;top:86px;width:1.2px;height:481.5px;background:#9f9fa6"></div>
<div class="a" style="left:76.5px;top:86px;width:1.2px;height:481.5px;background:#bebebe"></div>
<div class="a" style="left:281.8px;top:86px;width:1.2px;height:481.5px;background:#bebebe"></div>
<div class="a" style="left:76.3px;top:86px;width:1.4px;height:23px;background:#a6a6ac"></div>
<div class="a" style="left:77.7px;top:86px;width:1px;height:22px;background:#f4f4f8"></div>
<div class="a" style="left:281.6px;top:86px;width:1.4px;height:23px;background:#a6a6ac"></div>
<div class="a" style="left:283.0px;top:86px;width:1px;height:22px;background:#f4f4f8"></div>
<div class="a" style="left:44.7px;top:86px;width:1px;height:22px;background:#f4f4f8"></div>
<div class="a" style="left:14px;top:86px;width:1px;height:481.5px;background:#f4f4f8"></div>
<div class="t" style="left:77px;width:205.3px;top:87px;text-align:center;-webkit-text-stroke:0.1px #111">Название задачи</div>
<div class="t" style="left:282.3px;width:78.69999999999999px;top:87px;text-align:center;-webkit-text-stroke:0.1px #111;font-size:9.6px">Длительность</div>
<svg class="a" style="left:48px;top:89px" width="10" height="10" viewBox="0 0 10 10"><circle cx="5" cy="5" r="4.7" fill="#0a14e6"/><rect x="4.2" y="4.1" width="1.7" height="3.6" fill="#fff"/><rect x="3.5" y="4.1" width="2" height="0.9" fill="#fff"/><rect x="3.4" y="7" width="3.3" height="0.9" fill="#fff"/><circle cx="5" cy="2.5" r="1" fill="#fff"/></svg>
<div class="t" style="left:14px;width:30px;top:110.7px;text-align:center">1</div>
<div class="t" style="left:91.6px;width:189.70000000000002px;top:110.7px;overflow:hidden">0</div>
<div class="t" style="left:282.3px;width:52.19999999999999px;top:110.7px;text-align:right">0 дней</div>
<div class="t" style="left:14px;width:30px;top:126.7px;text-align:center">2</div>
<div class="t" style="left:91.6px;width:189.70000000000002px;top:126.7px;overflow:hidden">1</div>
<div class="t" style="left:282.3px;width:52.19999999999999px;top:126.7px;text-align:right">0 дней</div>
<div class="t" style="left:14px;width:30px;top:142.7px;text-align:center">3</div>
<div class="t" style="left:91.6px;width:189.70000000000002px;top:142.7px;overflow:hidden">2</div>
<div class="t" style="left:282.3px;width:52.19999999999999px;top:142.7px;text-align:right">0 дней</div>
<div class="t" style="left:14px;width:30px;top:158.7px;text-align:center">4</div>
<div class="t" style="left:91.6px;width:189.70000000000002px;top:158.7px;overflow:hidden">3</div>
<div class="t" style="left:282.3px;width:52.19999999999999px;top:158.7px;text-align:right">0 дней</div>
<div class="t" style="left:14px;width:30px;top:174.7px;text-align:center">5</div>
<div class="t" style="left:91.6px;width:189.70000000000002px;top:174.7px;overflow:hidden">4</div>
<div class="t" style="left:282.3px;width:52.19999999999999px;top:174.7px;text-align:right">0 дней</div>
<div class="t" style="left:14px;width:30px;top:190.7px;text-align:center">6</div>
<div class="t" style="left:91.6px;width:189.70000000000002px;top:190.7px;overflow:hidden">5</div>
<div class="t" style="left:282.3px;width:52.19999999999999px;top:190.7px;text-align:right">0 дней</div>
<div class="t" style="left:14px;width:30px;top:206.7px;text-align:center">7</div>
<div class="t" style="left:91.6px;width:189.70000000000002px;top:206.7px;overflow:hidden">6</div>
<div class="t" style="left:282.3px;width:52.19999999999999px;top:206.7px;text-align:right">0 дней</div>
<div class="t" style="left:14px;width:30px;top:222.7px;text-align:center">8</div>
<div class="t" style="left:91.6px;width:189.70000000000002px;top:222.7px;overflow:hidden">7</div>
<div class="t" style="left:282.3px;width:52.19999999999999px;top:222.7px;text-align:right">0 дней</div>
<div class="t" style="left:14px;width:30px;top:238.7px;text-align:center">9</div>
<div class="t" style="left:91.6px;width:189.70000000000002px;top:238.7px;overflow:hidden">8</div>
<div class="t" style="left:282.3px;width:52.19999999999999px;top:238.7px;text-align:right">0 дней</div>
<div class="t" style="left:14px;width:30px;top:254.7px;text-align:center">10</div>
<div class="t" style="left:91.6px;width:189.70000000000002px;top:254.7px;overflow:hidden">9</div>
<div class="t" style="left:282.3px;width:52.19999999999999px;top:254.7px;text-align:right">0 дней</div>
<div class="t" style="left:14px;width:30px;top:270.7px;text-align:center">11</div>
<div class="t" style="left:91.6px;width:189.70000000000002px;top:270.7px;overflow:hidden">(0-1) Подготовка к проектированию</div>
<div class="t" style="left:282.3px;width:52.19999999999999px;top:270.7px;text-align:right">1 день</div>
<div class="t" style="left:14px;width:30px;top:286.7px;text-align:center">12</div>
<div class="t" style="left:91.6px;width:189.70000000000002px;top:286.7px;overflow:hidden">(1-2) Проектирование механизма</div>
<div class="t" style="left:282.3px;width:52.19999999999999px;top:286.7px;text-align:right">3 дней</div>
<div class="t" style="left:14px;width:30px;top:302.7px;text-align:center">13</div>
<div class="t" style="left:91.6px;width:189.70000000000002px;top:302.7px;overflow:hidden">(1-3) Проектирование электрооборудовани</div>
<div class="t" style="left:282.3px;width:52.19999999999999px;top:302.7px;text-align:right">2 дней</div>
<div class="t" style="left:14px;width:30px;top:318.7px;text-align:center">14</div>
<div class="t" style="left:91.6px;width:189.70000000000002px;top:318.7px;overflow:hidden">(2-5) Изготовление механизма</div>
<div class="t" style="left:282.3px;width:52.19999999999999px;top:318.7px;text-align:right">8 дней</div>
<div class="t" style="left:14px;width:30px;top:334.7px;text-align:center">15</div>
<div class="t" style="left:91.6px;width:189.70000000000002px;top:334.7px;overflow:hidden">(3-4) Изготовление электрооборудования</div>
<div class="t" style="left:282.3px;width:52.19999999999999px;top:334.7px;text-align:right">6 дней</div>
<div class="t" style="left:14px;width:30px;top:350.7px;text-align:center">16</div>
<div class="t" style="left:91.6px;width:189.70000000000002px;top:350.7px;overflow:hidden">(4-5) Подготовка эл.оборудования к монтаж</div>
<div class="t" style="left:282.3px;width:52.19999999999999px;top:350.7px;text-align:right">1 день</div>
<div class="t" style="left:14px;width:30px;top:366.7px;text-align:center">17</div>
<div class="t" style="left:91.6px;width:189.70000000000002px;top:366.7px;overflow:hidden">(5-6) Сборка и монтаж оборудования</div>
<div class="t" style="left:282.3px;width:52.19999999999999px;top:366.7px;text-align:right">2 дней</div>
<div class="t" style="left:14px;width:30px;top:382.7px;text-align:center">18</div>
<div class="t" style="left:91.6px;width:189.70000000000002px;top:382.7px;overflow:hidden">(6-8) Обучение персонала</div>
<div class="t" style="left:282.3px;width:52.19999999999999px;top:382.7px;text-align:right">2 дней</div>
<div class="t" style="left:14px;width:30px;top:398.7px;text-align:center">19</div>
<div class="t" style="left:91.6px;width:189.70000000000002px;top:398.7px;overflow:hidden">(6-7) Регулировка</div>
<div class="t" style="left:282.3px;width:52.19999999999999px;top:398.7px;text-align:right">1 день</div>
<div class="t" style="left:14px;width:30px;top:414.7px;text-align:center">20</div>
<div class="t" style="left:91.6px;width:189.70000000000002px;top:414.7px;overflow:hidden">(7-8) Опробование</div>
<div class="t" style="left:282.3px;width:52.19999999999999px;top:414.7px;text-align:right">2 дней</div>
<div class="t" style="left:14px;width:30px;top:430.7px;text-align:center">21</div>
<div class="t" style="left:91.6px;width:189.70000000000002px;top:430.7px;overflow:hidden">(8-9) Пуск установки</div>
<div class="t" style="left:282.3px;width:52.19999999999999px;top:430.7px;text-align:right">1 день</div>
<div class="a" style="left:360px;top:86px;width:6px;height:497px;background:linear-gradient(90deg,#e8e8ea 0,#e8e8ea 0.4px,#c2c2c6 0.4px,#c2c2c6 1.9px,#ececf0 1.9px,#ececf0 4.5px,#b0b0b5 4.5px)"></div>
<div class="a" style="left:366px;top:86px;width:483px;height:481.5px;background:#fff;overflow:hidden" id="gantt">
<div class="hc" style="left:0;top:0;width:483px;height:23px"></div>
<div class="t" style="left:1.0px;top:-0.7px;font-size:9.25px">'06</div>
<div class="a" style="left:-1.9857142857143089px;top:11.5px;width:1.1px;height:11px;background:#b2b2b8"></div>
<div class="a" style="left:-0.8857142857143089px;top:12px;width:1px;height:10px;background:#f7f7fa"></div>
<div class="t" style="left:-1.4857142857143089px;width:10.971428571428572px;top:11px;text-align:center">Ч</div>
<div class="a" style="left:8.985714285714266px;top:11.5px;width:1.1px;height:11px;background:#b2b2b8"></div>
<div class="a" style="left:10.085714285714266px;top:12px;width:1px;height:10px;background:#f7f7fa"></div>
<div class="t" style="left:9.485714285714266px;width:10.971428571428572px;top:11px;text-align:center">П</div>
<div class="a" style="left:19.95714285714284px;top:11.5px;width:1.1px;height:11px;background:#b2b2b8"></div>
<div class="a" style="left:21.057142857142843px;top:12px;width:1px;height:10px;background:#f7f7fa"></div>
<div class="t" style="left:20.45714285714284px;width:10.971428571428572px;top:11px;text-align:center">С</div>
<div class="a" style="left:30.928571428571402px;top:11.5px;width:1.1px;height:11px;background:#b2b2b8"></div>
<div class="a" style="left:32.028571428571404px;top:12px;width:1px;height:10px;background:#f7f7fa"></div>
<div class="t" style="left:31.428571428571402px;width:10.971428571428572px;top:11px;text-align:center">В</div>
<div class="t" style="left:45.89999999999998px;top:-0.7px;font-size:9.25px">25 Дек '06</div>
<div class="a" style="left:41.799999999999976px;top:0;width:1.3px;height:23px;background:#9a9aa2"></div>
<div class="a" style="left:43.09999999999998px;top:0;width:1px;height:11px;background:#f7f7fa"></div>
<div class="a" style="left:41.89999999999998px;top:23px;width:1px;height:458.5px;background:repeating-linear-gradient(180deg,#b0b0b0 0,#b0b0b0 1px,#cecece 1px,#cecece 2px)"></div>
<div class="t" style="left:42.39999999999998px;width:10.971428571428572px;top:11px;text-align:center">П</div>
<div class="a" style="left:52.87142857142855px;top:11.5px;width:1.1px;height:11px;background:#b2b2b8"></div>
<div class="a" style="left:53.971428571428554px;top:12px;width:1px;height:10px;background:#f7f7fa"></div>
<div class="t" style="left:53.37142857142855px;width:10.971428571428572px;top:11px;text-align:center">В</div>
<div class="a" style="left:63.84285714285713px;top:11.5px;width:1.1px;height:11px;background:#b2b2b8"></div>
<div class="a" style="left:64.94285714285712px;top:12px;width:1px;height:10px;background:#f7f7fa"></div>
<div class="t" style="left:64.34285714285713px;width:10.971428571428572px;top:11px;text-align:center">С</div>
<div class="a" style="left:74.81428571428569px;top:11.5px;width:1.1px;height:11px;background:#b2b2b8"></div>
<div class="a" style="left:75.91428571428568px;top:12px;width:1px;height:10px;background:#f7f7fa"></div>
<div class="t" style="left:75.31428571428569px;width:10.971428571428572px;top:11px;text-align:center">Ч</div>
<div class="a" style="left:85.78571428571426px;top:11.5px;width:1.1px;height:11px;background:#b2b2b8"></div>
<div class="a" style="left:86.88571428571426px;top:12px;width:1px;height:10px;background:#f7f7fa"></div>
<div class="t" style="left:86.28571428571426px;width:10.971428571428572px;top:11px;text-align:center">П</div>
<div class="a" style="left:96.75714285714284px;top:11.5px;width:1.1px;height:11px;background:#b2b2b8"></div>
<div class="a" style="left:97.85714285714283px;top:12px;width:1px;height:10px;background:#f7f7fa"></div>
<div class="t" style="left:97.25714285714284px;width:10.971428571428572px;top:11px;text-align:center">С</div>
<div class="a" style="left:107.7285714285714px;top:11.5px;width:1.1px;height:11px;background:#b2b2b8"></div>
<div class="a" style="left:108.8285714285714px;top:12px;width:1px;height:10px;background:#f7f7fa"></div>
<div class="t" style="left:108.2285714285714px;width:10.971428571428572px;top:11px;text-align:center">В</div>
<div class="t" style="left:122.69999999999997px;top:-0.7px;font-size:9.25px">01 Янв '07</div>
<div class="a" style="left:118.59999999999998px;top:0;width:1.3px;height:23px;background:#9a9aa2"></div>
<div class="a" style="left:119.89999999999998px;top:0;width:1px;height:11px;background:#f7f7fa"></div>
<div class="a" style="left:118.69999999999997px;top:23px;width:1px;height:458.5px;background:repeating-linear-gradient(180deg,#b0b0b0 0,#b0b0b0 1px,#cecece 1px,#cecece 2px)"></div>
<div class="t" style="left:119.19999999999997px;width:10.971428571428572px;top:11px;text-align:center">П</div>
<div class="a" style="left:129.67142857142855px;top:11.5px;width:1.1px;height:11px;background:#b2b2b8"></div>
<div class="a" style="left:130.77142857142854px;top:12px;width:1px;height:10px;background:#f7f7fa"></div>
<div class="t" style="left:130.17142857142855px;width:10.971428571428572px;top:11px;text-align:center">В</div>
<div class="a" style="left:140.6428571428571px;top:11.5px;width:1.1px;height:11px;background:#b2b2b8"></div>
<div class="a" style="left:141.7428571428571px;top:12px;width:1px;height:10px;background:#f7f7fa"></div>
<div class="t" style="left:141.1428571428571px;width:10.971428571428572px;top:11px;text-align:center">С</div>
<div class="a" style="left:151.6142857142857px;top:11.5px;width:1.1px;height:11px;background:#b2b2b8"></div>
<div class="a" style="left:152.7142857142857px;top:12px;width:1px;height:10px;background:#f7f7fa"></div>
<div class="t" style="left:152.1142857142857px;width:10.971428571428572px;top:11px;text-align:center">Ч</div>
<div class="a" style="left:162.58571428571426px;top:11.5px;width:1.1px;height:11px;background:#b2b2b8"></div>
<div class="a" style="left:163.68571428571425px;top:12px;width:1px;height:10px;background:#f7f7fa"></div>
<div class="t" style="left:163.08571428571426px;width:10.971428571428572px;top:11px;text-align:center">П</div>
<div class="a" style="left:173.55714285714282px;top:11.5px;width:1.1px;height:11px;background:#b2b2b8"></div>
<div class="a" style="left:174.65714285714282px;top:12px;width:1px;height:10px;background:#f7f7fa"></div>
<div class="t" style="left:174.05714285714282px;width:10.971428571428572px;top:11px;text-align:center">С</div>
<div class="a" style="left:184.5285714285714px;top:11.5px;width:1.1px;height:11px;background:#b2b2b8"></div>
<div class="a" style="left:185.6285714285714px;top:12px;width:1px;height:10px;background:#f7f7fa"></div>
<div class="t" style="left:185.0285714285714px;width:10.971428571428572px;top:11px;text-align:center">В</div>
<div class="t" style="left:199.49999999999997px;top:-0.7px;font-size:9.25px">08 Янв '07</div>
<div class="a" style="left:195.39999999999998px;top:0;width:1.3px;height:23px;background:#9a9aa2"></div>
<div class="a" style="left:196.69999999999996px;top:0;width:1px;height:11px;background:#f7f7fa"></div>
<div class="a" style="left:195.49999999999997px;top:23px;width:1px;height:458.5px;background:repeating-linear-gradient(180deg,#b0b0b0 0,#b0b0b0 1px,#cecece 1px,#cecece 2px)"></div>
<div class="t" style="left:195.99999999999997px;width:10.971428571428572px;top:11px;text-align:center">П</div>
<div class="a" style="left:206.47142857142853px;top:11.5px;width:1.1px;height:11px;background:#b2b2b8"></div>
<div class="a" style="left:207.57142857142853px;top:12px;width:1px;height:10px;background:#f7f7fa"></div>
<div class="t" style="left:206.97142857142853px;width:10.971428571428572px;top:11px;text-align:center">В</div>
<div class="a" style="left:217.44285714285712px;top:11.5px;width:1.1px;height:11px;background:#b2b2b8"></div>
<div class="a" style="left:218.54285714285712px;top:12px;width:1px;height:10px;background:#f7f7fa"></div>
<div class="t" style="left:217.94285714285712px;width:10.971428571428572px;top:11px;text-align:center">С</div>
<div class="a" style="left:228.41428571428568px;top:11.5px;width:1.1px;height:11px;background:#b2b2b8"></div>
<div class="a" style="left:229.51428571428568px;top:12px;width:1px;height:10px;background:#f7f7fa"></div>
<div class="t" style="left:228.91428571428568px;width:10.971428571428572px;top:11px;text-align:center">Ч</div>
<div class="a" style="left:239.38571428571424px;top:11.5px;width:1.1px;height:11px;background:#b2b2b8"></div>
<div class="a" style="left:240.48571428571424px;top:12px;width:1px;height:10px;background:#f7f7fa"></div>
<div class="t" style="left:239.88571428571424px;width:10.971428571428572px;top:11px;text-align:center">П</div>
<div class="a" style="left:250.35714285714283px;top:11.5px;width:1.1px;height:11px;background:#b2b2b8"></div>
<div class="a" style="left:251.45714285714283px;top:12px;width:1px;height:10px;background:#f7f7fa"></div>
<div class="t" style="left:250.85714285714283px;width:10.971428571428572px;top:11px;text-align:center">С</div>
<div class="a" style="left:261.3285714285714px;top:11.5px;width:1.1px;height:11px;background:#b2b2b8"></div>
<div class="a" style="left:262.42857142857144px;top:12px;width:1px;height:10px;background:#f7f7fa"></div>
<div class="t" style="left:261.8285714285714px;width:10.971428571428572px;top:11px;text-align:center">В</div>
<div class="t" style="left:276.29999999999995px;top:-0.7px;font-size:9.25px">15 Янв '07</div>
<div class="a" style="left:272.19999999999993px;top:0;width:1.3px;height:23px;background:#9a9aa2"></div>
<div class="a" style="left:273.49999999999994px;top:0;width:1px;height:11px;background:#f7f7fa"></div>
<div class="a" style="left:272.29999999999995px;top:23px;width:1px;height:458.5px;background:repeating-linear-gradient(180deg,#b0b0b0 0,#b0b0b0 1px,#cecece 1px,#cecece 2px)"></div>
<div class="t" style="left:272.79999999999995px;width:10.971428571428572px;top:11px;text-align:center">П</div>
<div class="a" style="left:283.27142857142854px;top:11.5px;width:1.1px;height:11px;background:#b2b2b8"></div>
<div class="a" style="left:284.37142857142857px;top:12px;width:1px;height:10px;background:#f7f7fa"></div>
<div class="t" style="left:283.77142857142854px;width:10.971428571428572px;top:11px;text-align:center">В</div>
<div class="a" style="left:294.2428571428571px;top:11.5px;width:1.1px;height:11px;background:#b2b2b8"></div>
<div class="a" style="left:295.3428571428571px;top:12px;width:1px;height:10px;background:#f7f7fa"></div>
<div class="t" style="left:294.7428571428571px;width:10.971428571428572px;top:11px;text-align:center">С</div>
<div class="a" style="left:305.21428571428567px;top:11.5px;width:1.1px;height:11px;background:#b2b2b8"></div>
<div class="a" style="left:306.3142857142857px;top:12px;width:1px;height:10px;background:#f7f7fa"></div>
<div class="t" style="left:305.71428571428567px;width:10.971428571428572px;top:11px;text-align:center">Ч</div>
<div class="a" style="left:316.18571428571425px;top:11.5px;width:1.1px;height:11px;background:#b2b2b8"></div>
<div class="a" style="left:317.2857142857143px;top:12px;width:1px;height:10px;background:#f7f7fa"></div>
<div class="t" style="left:316.68571428571425px;width:10.971428571428572px;top:11px;text-align:center">П</div>
<div class="a" style="left:327.15714285714284px;top:11.5px;width:1.1px;height:11px;background:#b2b2b8"></div>
<div class="a" style="left:328.25714285714287px;top:12px;width:1px;height:10px;background:#f7f7fa"></div>
<div class="t" style="left:327.65714285714284px;width:10.971428571428572px;top:11px;text-align:center">С</div>
<div class="a" style="left:338.1285714285714px;top:11.5px;width:1.1px;height:11px;background:#b2b2b8"></div>
<div class="a" style="left:339.2285714285714px;top:12px;width:1px;height:10px;background:#f7f7fa"></div>
<div class="t" style="left:338.6285714285714px;width:10.971428571428572px;top:11px;text-align:center">В</div>
<div class="t" style="left:353.09999999999997px;top:-0.7px;font-size:9.25px">22 Янв '07</div>
<div class="a" style="left:348.99999999999994px;top:0;width:1.3px;height:23px;background:#9a9aa2"></div>
<div class="a" style="left:350.29999999999995px;top:0;width:1px;height:11px;background:#f7f7fa"></div>
<div class="a" style="left:349.09999999999997px;top:23px;width:1px;height:458.5px;background:repeating-linear-gradient(180deg,#b0b0b0 0,#b0b0b0 1px,#cecece 1px,#cecece 2px)"></div>
<div class="t" style="left:349.59999999999997px;width:10.971428571428572px;top:11px;text-align:center">П</div>
<div class="a" style="left:360.07142857142856px;top:11.5px;width:1.1px;height:11px;background:#b2b2b8"></div>
<div class="a" style="left:361.1714285714286px;top:12px;width:1px;height:10px;background:#f7f7fa"></div>
<div class="t" style="left:360.57142857142856px;width:10.971428571428572px;top:11px;text-align:center">В</div>
<div class="a" style="left:371.0428571428571px;top:11.5px;width:1.1px;height:11px;background:#b2b2b8"></div>
<div class="a" style="left:372.1428571428571px;top:12px;width:1px;height:10px;background:#f7f7fa"></div>
<div class="t" style="left:371.5428571428571px;width:10.971428571428572px;top:11px;text-align:center">С</div>
<div class="a" style="left:382.0142857142857px;top:11.5px;width:1.1px;height:11px;background:#b2b2b8"></div>
<div class="a" style="left:383.1142857142857px;top:12px;width:1px;height:10px;background:#f7f7fa"></div>
<div class="t" style="left:382.5142857142857px;width:10.971428571428572px;top:11px;text-align:center">Ч</div>
<div class="a" style="left:392.98571428571427px;top:11.5px;width:1.1px;height:11px;background:#b2b2b8"></div>
<div class="a" style="left:394.0857142857143px;top:12px;width:1px;height:10px;background:#f7f7fa"></div>
<div class="t" style="left:393.48571428571427px;width:10.971428571428572px;top:11px;text-align:center">П</div>
<div class="a" style="left:403.9571428571428px;top:11.5px;width:1.1px;height:11px;background:#b2b2b8"></div>
<div class="a" style="left:405.0571428571428px;top:12px;width:1px;height:10px;background:#f7f7fa"></div>
<div class="t" style="left:404.4571428571428px;width:10.971428571428572px;top:11px;text-align:center">С</div>
<div class="a" style="left:414.9285714285714px;top:11.5px;width:1.1px;height:11px;background:#b2b2b8"></div>
<div class="a" style="left:416.0285714285714px;top:12px;width:1px;height:10px;background:#f7f7fa"></div>
<div class="t" style="left:415.4285714285714px;width:10.971428571428572px;top:11px;text-align:center">В</div>
<div class="t" style="left:429.9px;top:-0.7px;font-size:9.25px">29 Янв '07</div>
<div class="a" style="left:425.79999999999995px;top:0;width:1.3px;height:23px;background:#9a9aa2"></div>
<div class="a" style="left:427.09999999999997px;top:0;width:1px;height:11px;background:#f7f7fa"></div>
<div class="a" style="left:425.9px;top:23px;width:1px;height:458.5px;background:repeating-linear-gradient(180deg,#b0b0b0 0,#b0b0b0 1px,#cecece 1px,#cecece 2px)"></div>
<div class="t" style="left:426.4px;width:10.971428571428572px;top:11px;text-align:center">П</div>
<div class="a" style="left:436.87142857142857px;top:11.5px;width:1.1px;height:11px;background:#b2b2b8"></div>
<div class="a" style="left:437.9714285714286px;top:12px;width:1px;height:10px;background:#f7f7fa"></div>
<div class="t" style="left:437.37142857142857px;width:10.971428571428572px;top:11px;text-align:center">В</div>
<div class="a" style="left:447.8428571428571px;top:11.5px;width:1.1px;height:11px;background:#b2b2b8"></div>
<div class="a" style="left:448.9428571428571px;top:12px;width:1px;height:10px;background:#f7f7fa"></div>
<div class="t" style="left:448.3428571428571px;width:10.971428571428572px;top:11px;text-align:center">С</div>
<div class="a" style="left:458.8142857142857px;top:11.5px;width:1.1px;height:11px;background:#b2b2b8"></div>
<div class="a" style="left:459.9142857142857px;top:12px;width:1px;height:10px;background:#f7f7fa"></div>
<div class="t" style="left:459.3142857142857px;width:10.971428571428572px;top:11px;text-align:center">Ч</div>
<div class="a" style="left:469.7857142857143px;top:11.5px;width:1.1px;height:11px;background:#b2b2b8"></div>
<div class="a" style="left:470.8857142857143px;top:12px;width:1px;height:10px;background:#f7f7fa"></div>
<div class="t" style="left:470.2857142857143px;width:10.971428571428572px;top:11px;text-align:center">П</div>
<div class="a" style="left:480.75714285714287px;top:11.5px;width:1.1px;height:11px;background:#b2b2b8"></div>
<div class="a" style="left:481.8571428571429px;top:12px;width:1px;height:10px;background:#f7f7fa"></div>
<div class="t" style="left:481.25714285714287px;width:10.971428571428572px;top:11px;text-align:center">С</div>
<div class="a" style="left:0;top:10.7px;width:483px;height:1.2px;background:#a2a2a8"></div>
<div class="a" style="left:0;top:22px;width:483px;height:1px;background:#b4b4b9"></div>
<div class="a" style="left:0;top:23px;width:483px;height:1px;background:#d6d6da"></div>
<svg class="a" style="left:113.89999999999998px;top:26.0px" width="11" height="11" viewBox="-5.5 -5.5 11 11"><path d="M0 -4.7 L4.7 0 L0 4.7 L-4.7 0z" fill="#000"/></svg>
<div class="t" style="left:130px;top:23.1px;font-weight:bold;font-size:8.7px;color:#000;-webkit-text-stroke:0.3px #000">01.01</div>
<svg class="a" style="left:113.89999999999998px;top:42.0px" width="11" height="11" viewBox="-5.5 -5.5 11 11"><path d="M0 -4.7 L4.7 0 L0 4.7 L-4.7 0z" fill="#000"/></svg>
<div class="t" style="left:130px;top:39.1px;font-weight:bold;font-size:8.7px;color:#000;-webkit-text-stroke:0.3px #000">01.01</div>
<svg class="a" style="left:113.89999999999998px;top:58.0px" width="11" height="11" viewBox="-5.5 -5.5 11 11"><path d="M0 -4.7 L4.7 0 L0 4.7 L-4.7 0z" fill="#000"/></svg>
<div class="t" style="left:130px;top:55.1px;font-weight:bold;font-size:8.7px;color:#000;-webkit-text-stroke:0.3px #000">01.01</div>
<svg class="a" style="left:113.89999999999998px;top:74.0px" width="11" height="11" viewBox="-5.5 -5.5 11 11"><path d="M0 -4.7 L4.7 0 L0 4.7 L-4.7 0z" fill="#000"/></svg>
<div class="t" style="left:130px;top:71.1px;font-weight:bold;font-size:8.7px;color:#000;-webkit-text-stroke:0.3px #000">01.01</div>
<svg class="a" style="left:113.89999999999998px;top:90.0px" width="11" height="11" viewBox="-5.5 -5.5 11 11"><path d="M0 -4.7 L4.7 0 L0 4.7 L-4.7 0z" fill="#000"/></svg>
<div class="t" style="left:130px;top:87.1px;font-weight:bold;font-size:8.7px;color:#000;-webkit-text-stroke:0.3px #000">01.01</div>
<svg class="a" style="left:113.89999999999998px;top:106.0px" width="11" height="11" viewBox="-5.5 -5.5 11 11"><path d="M0 -4.7 L4.7 0 L0 4.7 L-4.7 0z" fill="#000"/></svg>
<div class="t" style="left:130px;top:103.1px;font-weight:bold;font-size:8.7px;color:#000;-webkit-text-stroke:0.3px #000">01.01</div>
<svg class="a" style="left:113.89999999999998px;top:122.0px" width="11" height="11" viewBox="-5.5 -5.5 11 11"><path d="M0 -4.7 L4.7 0 L0 4.7 L-4.7 0z" fill="#000"/></svg>
<div class="t" style="left:130px;top:119.1px;font-weight:bold;font-size:8.7px;color:#000;-webkit-text-stroke:0.3px #000">01.01</div>
<svg class="a" style="left:113.89999999999998px;top:138.0px" width="11" height="11" viewBox="-5.5 -5.5 11 11"><path d="M0 -4.7 L4.7 0 L0 4.7 L-4.7 0z" fill="#000"/></svg>
<div class="t" style="left:130px;top:135.1px;font-weight:bold;font-size:8.7px;color:#000;-webkit-text-stroke:0.3px #000">01.01</div>
<svg class="a" style="left:113.89999999999998px;top:154.0px" width="11" height="11" viewBox="-5.5 -5.5 11 11"><path d="M0 -4.7 L4.7 0 L0 4.7 L-4.7 0z" fill="#000"/></svg>
<div class="t" style="left:130px;top:151.1px;font-weight:bold;font-size:8.7px;color:#000;-webkit-text-stroke:0.3px #000">01.01</div>
<svg class="a" style="left:113.89999999999998px;top:170.0px" width="11" height="11" viewBox="-5.5 -5.5 11 11"><path d="M0 -4.7 L4.7 0 L0 4.7 L-4.7 0z" fill="#000"/></svg>
<div class="t" style="left:130px;top:167.1px;font-weight:bold;font-size:8.7px;color:#000;-webkit-text-stroke:0.3px #000">01.01</div>
<div class="a" style="left:120px;top:187.0px;width:10.771428571428572px;height:9.7px;box-sizing:border-box;border:1.2px solid #1414fa;background:#7e7ef8"></div>
<div class="a" style="left:120px;top:203.0px;width:32.71428571428571px;height:9.7px;box-sizing:border-box;border:1.2px solid #1414fa;background:#7e7ef8"></div>
<div class="a" style="left:120px;top:219.0px;width:21.742857142857144px;height:9.7px;box-sizing:border-box;border:1.2px solid #1414fa;background:#7e7ef8"></div>
<div class="a" style="left:120px;top:235.0px;width:87.57142857142857px;height:9.7px;box-sizing:border-box;border:1.2px solid #ff2424;background:#fd8686"></div>
<div class="a" style="left:120px;top:251.0px;width:65.62857142857142px;height:9.7px;box-sizing:border-box;border:1.2px solid #1414fa;background:#7e7ef8"></div>
<div class="a" style="left:120px;top:267.0px;width:10.771428571428572px;height:9.7px;box-sizing:border-box;border:1.2px solid #1414fa;background:#7e7ef8"></div>
<div class="a" style="left:120px;top:283.0px;width:21.742857142857144px;height:9.7px;box-sizing:border-box;border:1.2px solid #1414fa;background:#7e7ef8"></div>
<div class="a" style="left:120px;top:299.0px;width:21.742857142857144px;height:9.7px;box-sizing:border-box;border:1.2px solid #1414fa;background:#7e7ef8"></div>
<div class="a" style="left:120px;top:315.0px;width:10.771428571428572px;height:9.7px;box-sizing:border-box;border:1.2px solid #1414fa;background:#7e7ef8"></div>
<div class="a" style="left:120px;top:331.0px;width:21.742857142857144px;height:9.7px;box-sizing:border-box;border:1.2px solid #1414fa;background:#7e7ef8"></div>
<div class="a" style="left:120px;top:347.0px;width:10.771428571428572px;height:9.7px;box-sizing:border-box;border:1.2px solid #1414fa;background:#7e7ef8"></div>
</div>
<svg class="a" style="left:0;top:0" width="864" height="583" viewBox="0 0 864 583"><ellipse cx="503.7" cy="276.9" rx="119.6" ry="198.0" fill="none" stroke="#2f9a32" stroke-width="3.6"/></svg>
<div class="a" style="left:14px;top:567.5px;width:347px;height:15.5px;background:#ececf0"></div>
<div class="a" style="left:366px;top:567.5px;width:498px;height:15.5px;background:#ececf0"></div>
<div class="a" style="left:849px;top:86px;width:15px;height:497px;background:#ececf0"></div>
<div class="a" style="left:14px;top:567.4px;width:13.5px;height:14.6px;box-sizing:border-box;background:#e2e2e8;border:1px solid;border-color:#fdfdfe #55555c #55555c #fdfdfe;box-shadow:inset -1px -1px 0 #a6a6ae"></div><svg class="a" style="left:0;top:0;pointer-events:none" width="864" height="583"><path d="M22.25 571.6999999999999 L18.95 574.6999999999999 L22.25 577.6999999999999z" fill="#000"/></svg>
<div class="a" style="left:28.5px;top:567.4px;width:14px;height:14.6px;box-sizing:border-box;background:#e2e2e8;border:1px solid;border-color:#fdfdfe #55555c #55555c #fdfdfe;box-shadow:inset -1px -1px 0 #a6a6ae"></div>
<div class="a" style="left:347px;top:567.4px;width:13.5px;height:14.6px;box-sizing:border-box;background:#e2e2e8;border:1px solid;border-color:#fdfdfe #55555c #55555c #fdfdfe;box-shadow:inset -1px -1px 0 #a6a6ae"></div><svg class="a" style="left:0;top:0;pointer-events:none" width="864" height="583"><path d="M352.25 571.6999999999999 L355.55 574.6999999999999 L352.25 577.6999999999999z" fill="#000"/></svg>
<div class="a" style="left:366.5px;top:567.4px;width:13.5px;height:14.6px;box-sizing:border-box;background:#e2e2e8;border:1px solid;border-color:#fdfdfe #55555c #55555c #fdfdfe;box-shadow:inset -1px -1px 0 #a6a6ae"></div><svg class="a" style="left:0;top:0;pointer-events:none" width="864" height="583"><path d="M374.75 571.6999999999999 L371.45 574.6999999999999 L374.75 577.6999999999999z" fill="#000"/></svg>
<div class="a" style="left:380.5px;top:567.4px;width:14px;height:14.6px;box-sizing:border-box;background:#e2e2e8;border:1px solid;border-color:#fdfdfe #55555c #55555c #fdfdfe;box-shadow:inset -1px -1px 0 #a6a6ae"></div>
<div class="a" style="left:835.5px;top:567.4px;width:13.5px;height:14.6px;box-sizing:border-box;background:#e2e2e8;border:1px solid;border-color:#fdfdfe #55555c #55555c #fdfdfe;box-shadow:inset -1px -1px 0 #a6a6ae"></div><svg class="a" style="left:0;top:0;pointer-events:none" width="864" height="583"><path d="M840.75 571.6999999999999 L844.05 574.6999999999999 L840.75 577.6999999999999z" fill="#000"/></svg>
<div class="a" style="left:849.5px;top:86px;width:13.5px;height:12.5px;box-sizing:border-box;background:#e2e2e8;border:1px solid;border-color:#fdfdfe #55555c #55555c #fdfdfe;box-shadow:inset -1px -1px 0 #a6a6ae"></div><svg class="a" style="left:0;top:0;pointer-events:none" width="864" height="583"><path d="M853.25 93.55 L856.25 90.45 L859.25 93.55z" fill="#000"/></svg>
<div class="a" style="left:849.5px;top:98.5px;width:13.5px;height:14.5px;box-sizing:border-box;background:#e2e2e8;border:1px solid;border-color:#fdfdfe #55555c #55555c #fdfdfe;box-shadow:inset -1px -1px 0 #a6a6ae"></div>
<div class="a" style="left:849.5px;top:547px;width:13.5px;height:12.5px;box-sizing:border-box;background:#e2e2e8;border:1px solid;border-color:#fdfdfe #55555c #55555c #fdfdfe;box-shadow:inset -1px -1px 0 #a6a6ae"></div><svg class="a" style="left:0;top:0;pointer-events:none" width="864" height="583"><path d="M853.25 551.75 L856.25 555.05 L859.25 551.75z" fill="#000"/></svg>
<div class="a" style="left:849.5px;top:560px;width:13.5px;height:7px;box-sizing:border-box;background:#e2e2e8;border:1px solid;border-color:#fdfdfe #55555c #55555c #fdfdfe;box-shadow:inset -1px -1px 0 #a6a6ae"></div>
<svg class="a" style="left:849px;top:568px" width="15" height="15" viewBox="0 0 15 15"><path d="M14 4 L4 14 M14 8 L8 14 M14 11.5 L11.5 14" stroke="#9a9aa4" stroke-width="1.1"/></svg>
</div></body></html>
